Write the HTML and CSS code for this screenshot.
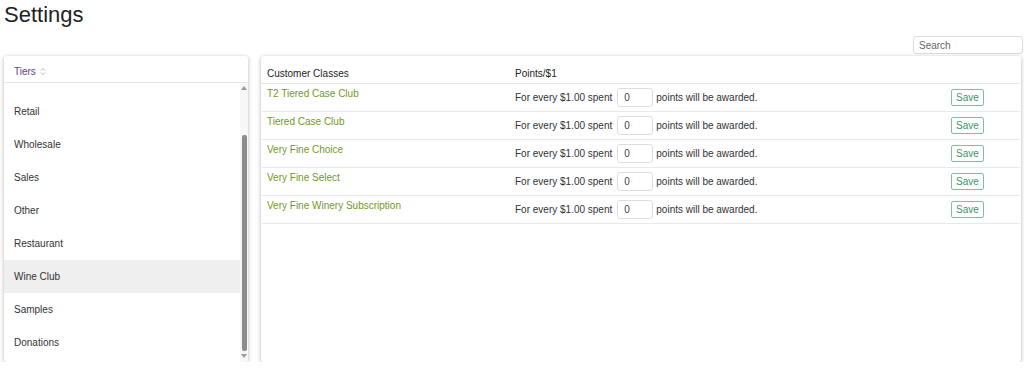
FILE: index.html
```html
<!DOCTYPE html>
<html lang="en">
<head>
    <meta charset="UTF-8">
    <meta name="viewport" content="width=device-width, initial-scale=1.0">
    <title>Settings</title>
    <link rel="stylesheet" href="styles.css">
</head>
<body>

<h1 class="title">Settings</h1>

<div class="toolbar">
    <input type="text" class="search" placeholder="Search">
</div>

<div class="panels">
    <!-- tiers list -->
    <div class="panel tiers">
        <div class="tiers-head">
            Tiers
            <svg class="sort" width="6" height="9" viewBox="0 0 6 9">
                <path d="M1 3.5 L3 1.5 L5 3.5 M1 5.5 L3 7.5 L5 5.5" fill="none" stroke="#aaa" stroke-width="0.9"/>
            </svg>
        </div>
        <div class="tiers-body">
            <ul class="tier-list">
                <li>Retail</li>
                <li>Wholesale</li>
                <li>Sales</li>
                <li>Other</li>
                <li>Restaurant</li>
                <li class="active">Wine Club</li>
                <li>Samples</li>
                <li>Donations</li>
            </ul>
            <div class="scrollbar">
                <div class="arrow up"></div>
                <div class="thumb"></div>
                <div class="arrow down"></div>
            </div>
        </div>
    </div>

    <!-- points table -->
    <div class="panel classes">
        <div class="row head">
            <div class="name">Customer Classes</div>
            <div class="points">Points/$1</div>
            <div class="action"></div>
        </div>
        <div class="row">
            <div class="name">T2 Tiered Case Club</div>
            <div class="points">For every $1.00 spent <input type="text" class="pts" value="0"> points will be awarded.</div>
            <div class="action"><button class="save">Save</button></div>
        </div>
        <div class="row">
            <div class="name">Tiered Case Club</div>
            <div class="points">For every $1.00 spent <input type="text" class="pts" value="0"> points will be awarded.</div>
            <div class="action"><button class="save">Save</button></div>
        </div>
        <div class="row">
            <div class="name">Very Fine Choice</div>
            <div class="points">For every $1.00 spent <input type="text" class="pts" value="0"> points will be awarded.</div>
            <div class="action"><button class="save">Save</button></div>
        </div>
        <div class="row">
            <div class="name">Very Fine Select</div>
            <div class="points">For every $1.00 spent <input type="text" class="pts" value="0"> points will be awarded.</div>
            <div class="action"><button class="save">Save</button></div>
        </div>
        <div class="row">
            <div class="name">Very Fine Winery Subscription</div>
            <div class="points">For every $1.00 spent <input type="text" class="pts" value="0"> points will be awarded.</div>
            <div class="action"><button class="save">Save</button></div>
        </div>
    </div>
</div>

</body>
</html>
```

FILE: styles.css
```css
body {
    margin: 0;
    padding: 0 1px 0 4px;
    font-family: "Liberation Sans", Arial, sans-serif;
    font-size: 10px;
    color: #333;
    background: #fff;
}
.title {
    margin: 2px 0 0;
    font-size: 22px;
    font-weight: normal;
    line-height: 26px;
    color: #222;
}
.toolbar {
    display: flex;
    justify-content: flex-end;
    margin-top: 8px;
}
.search {
    width: 110px;
    height: 18px;
    box-sizing: border-box;
    padding: 0 5px;
    font-family: inherit;
    font-size: 10px;
    border: 1px solid #ddd;
    border-radius: 3px;
    outline: none;
}
.search::placeholder { color: #666; }
.panels {
    display: grid;
    grid-template-columns: 244px 1fr;
    gap: 13px;
    margin-top: 2px;
    margin-right: 2px;
    height: 306px;
}
.panel {
    background: #fff;
    border-radius: 3px;
    box-shadow: 0 1px 4px rgba(0, 0, 0, 0.3);
}
.tiers {
    display: flex;
    flex-direction: column;
    overflow: hidden;
}
.tiers-head {
    height: 27px;
    box-sizing: border-box;
    padding: 10px 10px 0;
    line-height: 12px;
    color: #5b4585;
    border-bottom: 1px solid #e6e6e6;
}
.sort { vertical-align: -1px; margin-left: 1px; }
.tiers-body {
    flex: 1;
    display: flex;
}
.tier-list {
    flex: 1;
    list-style: none;
    margin: 0;
    padding: 12px 0 0;
}
.tier-list li {
    height: 33px;
    line-height: 33px;
    padding-left: 10px;
    color: #333;
}
.tier-list li.active { background: #efefef; }
.scrollbar {
    width: 8px;
    display: flex;
    flex-direction: column;
    align-items: center;
    background: #f7f7f7;
}
.arrow {
    width: 0;
    height: 0;
    border-left: 3px solid transparent;
    border-right: 3px solid transparent;
}
.arrow.up {
    margin-top: 3px;
    border-bottom: 4px solid #999;
    margin-bottom: 45px;
}
.thumb {
    width: 5px;
    height: 216px;
    background: #8c8c8c;
    border-radius: 2px;
}
.arrow.down {
    margin-top: 3px;
    border-top: 4px solid #999;
}
.row {
    display: grid;
    grid-template-columns: 247px 1fr 70px;
    height: 28px;
    box-sizing: border-box;
    margin: 0 1px;
    padding-left: 5px;
    border-bottom: 1px solid #e8e8e8;
}
.row.head {
    height: 28px;
    padding-top: 12px;
    color: #222;
    border-bottom-color: #e4e4e4;
}
.row.head .name, .row.head .points { line-height: 12px; padding-top: 0; }
.name {
    padding-top: 4px;
    line-height: 12px;
    color: #6f9a1b;
}
.row.head .name { color: #222; }
.points {
    display: flex;
    align-items: center;
    padding-left: 1px;
}
.row.head .points { display: block; }
.pts {
    width: 36px;
    height: 19px;
    box-sizing: border-box;
    margin: 0 3px 0 5px;
    padding: 0 6px;
    font-family: inherit;
    font-size: 10px;
    color: #444;
    border: 1px solid #ddd;
    border-radius: 3px;
    outline: none;
}
.action {
    display: flex;
    align-items: center;
    padding-left: 1px;
}
.save {
    width: 33px;
    height: 17px;
    padding: 0;
    font-family: inherit;
    font-size: 10px;
    color: #3e9468;
    background: #fff;
    border: 1px solid #7cc0a0;
    border-radius: 2px;
    cursor: pointer;
}
```
